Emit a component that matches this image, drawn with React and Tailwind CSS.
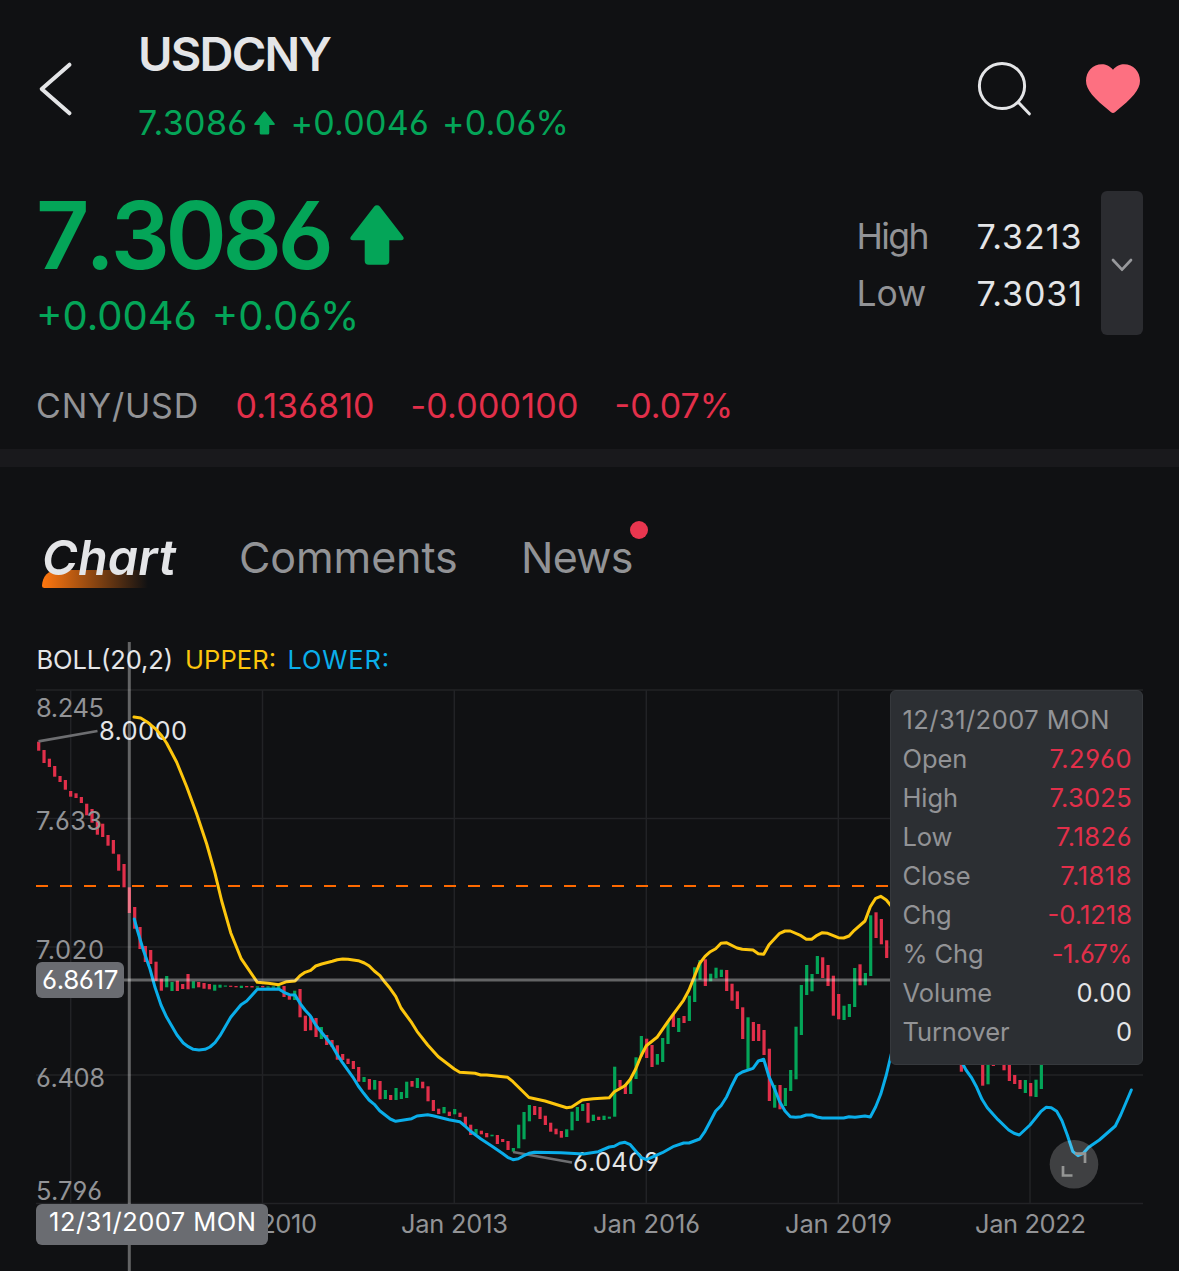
import React from "react";

// [slot, high, low, rising]
const CANDLES = [
  [0, 741.7, 750.7, 0], [1, 750, 763, 0], [2, 758.7, 767, 0], [3, 766, 776.7, 0], [4, 776, 782, 0],
  [5, 780, 789.7, 0], [6, 791, 796.7, 0], [7, 793.3, 798, 0], [8, 797, 803, 0], [9, 803.7, 815.3, 0],
  [10, 809, 822.7, 0], [11, 821.7, 834.7, 0], [12, 823.7, 837, 0], [13, 835, 845.7, 0], [14, 840, 853.7, 0],
  [15, 854.3, 870.7, 0], [16, 864, 887.3, 0], [17, 887.3, 913, 0], [18, 907, 928.7, 0], [19, 927, 949, 0],
  [20, 946, 962, 0], [21, 950, 964, 0], [22, 961.7, 981, 0], [23, 978.7, 990.7, 0], [24, 976, 987.3, 1],
  [25, 982, 991, 1], [26, 980.7, 991, 0], [27, 984, 989, 0], [28, 974, 989.3, 0], [29, 981.3, 988.3, 1],
  [30, 982, 987.3, 0], [31, 983, 988.7, 0], [32, 984, 989.3, 0], [33, 984.7, 990.7, 1], [34, 984.7, 987.7, 1],
  [35, 985.5, 986.7, 1], [36, 985.7, 986.9, 0], [37, 986, 987.3, 0], [38, 985.7, 988, 1], [39, 986, 987.3, 0],
  [40, 986, 987.5, 0], [41, 986.3, 987.7, 1], [42, 986, 987.3, 0], [43, 986.3, 987.7, 1], [44, 986.3, 987.7, 1],
  [45, 985.7, 988, 1], [46, 986, 997, 0], [47, 996, 999.7, 0], [48, 990.7, 1000, 1], [49, 989, 1017.3, 0],
  [50, 1015.7, 1031, 0], [51, 1016, 1030.3, 0], [52, 1018, 1037, 0], [53, 1027, 1039, 1], [54, 1035, 1045, 0],
  [55, 1040, 1047, 0], [56, 1045.3, 1059.7, 0], [57, 1054, 1060, 0], [58, 1058.7, 1064, 0], [59, 1061, 1069, 0],
  [60, 1067, 1081.7, 0], [61, 1077, 1082, 1], [62, 1079, 1089.7, 0], [63, 1080, 1089.7, 1], [64, 1081, 1099.3, 0],
  [65, 1090, 1099, 1], [66, 1095, 1100, 0], [67, 1088, 1100, 1], [68, 1092, 1099, 1], [69, 1081.7, 1098, 1],
  [70, 1081, 1086.7, 0], [71, 1078, 1088, 1], [72, 1081.7, 1088.3, 0], [73, 1086.3, 1101.3, 0], [74, 1100, 1111, 0],
  [75, 1108.7, 1114, 0], [76, 1107, 1113.3, 1], [77, 1111.7, 1116, 0], [78, 1109, 1114.3, 1], [79, 1112.7, 1117, 0],
  [80, 1116.7, 1126, 0], [81, 1124.7, 1135, 0], [82, 1129, 1134.3, 1], [83, 1130.7, 1134.3, 0], [84, 1133, 1137.3, 0],
  [85, 1134.7, 1136.3, 1], [86, 1135, 1144, 0], [87, 1139, 1142, 0], [88, 1141, 1150, 0], [89, 1148, 1151.7, 1],
  [90, 1124.7, 1148.3, 1], [91, 1112, 1139.3, 1], [92, 1105, 1121.3, 1], [93, 1106, 1115, 0], [94, 1107, 1119, 0],
  [95, 1115.7, 1125, 0], [96, 1122.7, 1131.7, 0], [97, 1128.7, 1134.3, 0], [98, 1131, 1137.7, 0], [99, 1129.3, 1137, 1],
  [100, 1111.7, 1130.3, 1], [101, 1107, 1121, 1], [102, 1104, 1111, 1], [103, 1103, 1122.7, 0], [104, 1114.7, 1121, 1],
  [105, 1116.7, 1120, 0], [106, 1115.7, 1120, 1], [107, 1116.7, 1118.7, 1], [108, 1066.7, 1116.7, 1], [109, 1080, 1087.3, 0],
  [110, 1084, 1094, 0], [111, 1078.7, 1094, 1], [112, 1057.3, 1079, 1], [113, 1036, 1056.7, 1], [114, 1038.7, 1058, 0],
  [115, 1045, 1067, 0], [116, 1054, 1064.7, 1], [117, 1038, 1062, 1], [118, 1021.3, 1044, 1], [119, 1014.3, 1027, 0],
  [120, 1018, 1032, 1], [121, 1016, 1023, 0], [122, 995.7, 1021, 1], [123, 967.3, 1002, 1], [124, 960, 979.7, 1],
  [125, 959.3, 986, 0], [126, 973.7, 981.3, 1], [127, 967.7, 978.3, 1], [128, 969.7, 977, 1], [129, 970, 991, 0],
  [130, 983.7, 1000.7, 0], [131, 991.3, 1009, 0], [132, 1007.3, 1039, 0], [133, 1017.3, 1069.3, 1], [134, 1022, 1041, 0],
  [135, 1024, 1041, 0], [136, 1030, 1055, 0], [137, 1048.7, 1101, 0], [138, 1085, 1107.7, 1], [139, 1085, 1109.3, 0],
  [140, 1088, 1106, 1], [141, 1070, 1091, 1], [142, 1026.7, 1079.3, 1], [143, 985, 1035, 1], [144, 965, 995, 1],
  [145, 974, 991.3, 1], [146, 956, 974, 1], [147, 957.3, 978, 0], [148, 965, 986, 0], [149, 975.7, 1015.7, 0],
  [150, 994, 1019.3, 0], [151, 1005.7, 1020, 1], [152, 1004, 1017, 1], [153, 968, 1007, 1], [154, 964.3, 985.3, 0],
  [155, 973, 985.3, 1], [156, 915.3, 976, 1], [157, 912.3, 938, 0], [158, 919, 944.3, 0], [159, 940.3, 958, 0],
  [173, 1050, 1071.7, 0], [177, 1050, 1085.7, 0], [178, 1050, 1084.3, 1], [179, 1050, 1066, 0], [181, 1050, 1070.3, 0],
  [182, 1050, 1081, 0], [183, 1075, 1084, 0], [184, 1080, 1089, 0], [185, 1080, 1093, 1], [186, 1083, 1096.3, 0],
  [187, 1079.7, 1097, 1], [188, 1050, 1089, 1],
];

const UPPER =
  "134,717 140.7,718 146.7,721.7 155,728.3 161.7,735.7 166.7,743.3 176.7,762.3 186.7,786.7 196.7,814 206.7,844 215,873.3 221.7,901 230.7,932.7 241,958.3 257.3,982.3 268.3,983.3 278.7,984.7 286.7,981.7 295,981 300,975.7 305,972.3 310.7,970.3 315.7,966 321.7,964 332.3,961.3 337.3,959.7 342.7,959 348,959.3 358.3,960.7 364.3,963 369,965.7 374.3,971 380,975.7 385,982.3 390,988.3 395.7,996.3 401,1008 411.7,1022.7 417,1031.3 427.7,1045 438.3,1056.7 454.3,1069 459.7,1072.3 475,1073.3 480.7,1075 486.7,1075 507.7,1077.3 513,1081.7 529,1097.5 545,1101 566.7,1107.7 571.7,1107 582.3,1100 593.3,1098.7 609.3,1097.7 614.3,1091.7 625,1085.7 630.3,1079.3 635.7,1069 641,1056 646.3,1045.7 657,1037.3 667.7,1021.8 683.5,1000.3 689,990 694.3,976.7 699.7,963.3 705,956.3 710.3,951.7 715.7,948.7 721,943.3 726.3,942.7 737,948 742.3,949.3 753,950 758.3,953.7 763.7,954.3 769,944.7 774.3,939 779.7,933.3 785,931 790.3,931 801,935.7 806.3,939.3 811.7,939.3 817,935.3 822.3,932.7 827.7,933.3 838.3,937.7 843.7,938 849,936 854.3,930.3 865,921 870.3,906.7 875.7,898.3 880.7,896.3 886.3,900 892,907";

const LOWER_LEFT =
  "134.3,919 137.3,930 143.3,950 150,969 155,987.3 161,1005 166.7,1017.3 177,1035 183.3,1043 188.3,1046.7 193.3,1049.3 199,1050 205,1049.3 210,1047 215,1042.7 220,1035.7 230.7,1017.3 241,1004.7 246.7,1001 257.3,989.3 278.7,989 284,992.3 289.3,994.7 295,995 300,1003.3 305,1010 310.3,1015.7 315.7,1025 326.3,1038.3 331.7,1045 337,1054.3 342.3,1062.3 353,1077.3 358.3,1086 363.7,1093.3 369,1100 374.3,1104.3 379.7,1110.7 390.3,1119 395.7,1121.3 411.7,1118.7 417,1116 427.7,1114.7 433,1115.7 449,1119.7 459.7,1121.7 465,1126 470.3,1131 481,1139 491.7,1146 502.3,1153.3 507.7,1157.3 513,1159.7 518.3,1158.7 523.7,1155.7 529,1153.3 534.3,1152.3 561,1152.7 583.3,1154 598.3,1151.7 609.3,1147 614.3,1146.3 619.7,1143.3 625,1142.3 630.3,1144.7 641,1157.3 646.3,1159.7 651.7,1157.3 662.3,1152.7 673,1146.7 683.7,1143 689,1143 699.7,1139 705,1131.3 710.3,1121.3 715.7,1111 721,1105.7 726.7,1096.7 731.7,1085.7 737,1075.3 742.3,1072 753,1068.3 758.3,1061 763.7,1059.3 769,1076.7 774.3,1088.3 779.7,1101.7 785,1111 790.3,1116.7 795.7,1117.3 801,1116.7 806.3,1115 811.7,1115 817,1117 822.3,1118 843.7,1118 849,1116.7 855,1117.3 865,1116 870.3,1117 875.7,1106.7 880.7,1094.3 886.3,1075 892,1051";

const LOWER_RIGHT =
  "960,1060 963.3,1065 966,1070 971.3,1077.3 976.7,1087.3 982,1099.3 987.3,1107.7 998,1119.7 1008.7,1130 1014,1133.3 1019.3,1135 1030,1125 1040.7,1111.7 1046,1107.3 1051.3,1107.7 1056.7,1111.3 1062,1120.7 1067.3,1135 1072.7,1151.3 1078,1155.7 1083.3,1153.3 1088.7,1147.3 1099.3,1140 1115.3,1126 1120.7,1115 1131.3,1090";

const V_GRID = [70.7, 262.5, 454.3, 646.3, 838.3, 1030];
const H_GRID = [690, 818.5, 947, 1075, 1203.5];

// [text, x, baseline, width]
const PRICE_LABELS = [
  ["8.245", 36, 716.5, 68],
  ["7.633", 36, 830.3, 66],
  ["7.020", 36, 958.6, 68],
  ["6.408", 36, 1087, 69],
  ["5.796", 36, 1200.3, 66],
];
const DATE_LABELS = [
  ["Jan 2010", 211, 1233, 106],
  ["Jan 2013", 401, 1233, 107],
  ["Jan 2016", 593, 1233, 107],
  ["Jan 2019", 785, 1233, 107],
  ["Jan 2022", 975, 1233, 111],
];

const TOOLTIP = [
  ["Open", "7.2960", "tracking-[0.5px] text-[#e22f4a]"],
  ["High", "7.3025", "tracking-[0.3px] text-[#e22f4a]"],
  ["Low", "7.1826", "tracking-[0.5px] text-[#e22f4a]"],
  ["Close", "7.1818", "tracking-[0.5px] text-[#e22f4a]"],
  ["Chg", "-0.1218", "text-[#e22f4a]"],
  ["% Chg", "-1.67%", "tracking-[-0.4px] text-[#e22f4a]"],
  ["Volume", "0.00", "tracking-[0.3px] text-[#e4e5e7]"],
  ["Turnover", "0", "text-[#e4e5e7]"],
];

function UpArrow({ className }) {
  return (
    <svg viewBox="0 0 54 60" className={className} fill="currentColor">
      <path d="M24.2 1.6a3.6 3.6 0 0 1 5.6 0L53 31.4c1.4 1.9.6 3.8-1.8 3.8H39.3v20.6a4 4 0 0 1-4 4H18.7a4 4 0 0 1-4-4V35.2H2.8C.4 35.2-.4 33.3 1 31.4Z" />
    </svg>
  );
}

function Label({ item, fill }) {
  return (
    <text x={item[1]} y={item[2]} textLength={item[3]} lengthAdjust="spacing" fill={fill}>
      {item[0]}
    </text>
  );
}

function Header() {
  return (
    <header className="flex h-[172px] items-start pl-[38px] pr-[39px]">
      <svg viewBox="0 0 36 56" className="mt-[61px] h-14 w-9" fill="none" stroke="#e4e5e7" strokeWidth="4" strokeLinecap="round" strokeLinejoin="round">
        <path d="M31.5 3.7 3.7 28l27.8 24.3" />
      </svg>
      <div className="ml-[63px] pt-6">
        <h1 className="h-[60px] pl-px text-[47px] font-semibold leading-[60px] tracking-[-1.8px] text-[#e4e5e7]">USDCNY</h1>
        <div className="mt-[19px] flex h-10 items-center whitespace-nowrap text-[34px] leading-10 text-[#04a558]">
          <span className="ml-px tracking-[0.4px]">7.3086</span>
          <UpArrow className="ml-1.5 h-6 w-[21px]" />
          <span className="ml-4 tracking-[0.25px]">+0.0046</span>
          <span className="ml-[13px] tracking-[0.3px]">+0.06%</span>
        </div>
      </div>
      <svg viewBox="0 0 56 56" className="ml-auto mt-[60px] size-14" fill="none" stroke="#e4e5e7" strokeWidth="3" strokeLinecap="round">
        <circle cx="27" cy="26" r="22.6" />
        <path d="M43.3 42.3 54.3 53.8" />
      </svg>
      <svg viewBox="0 0 54 50" className="ml-[55px] mt-16 h-[50px] w-[54px]" fill="#fd7081">
        <path d="M27 5.8C30.5 1.5 34.2.2 38 .2 47.3.2 54 7.3 54 16.8 54 26 46 34.5 29.2 48a3.5 3.5 0 0 1-4.4 0C8 34.5 0 26 0 16.8 0 7.3 6.7.2 16 .2 19.8.2 23.5 1.5 27 5.8Z" />
      </svg>
    </header>
  );
}

function Quote() {
  return (
    <section className="h-[277px] pl-9 pr-9 pt-[19px]">
      <div className="flex h-[144px] items-start justify-between">
        <div className="text-[#04a558]">
          <div className="flex h-[88px] items-center">
            <span className="w-[298px] text-[93px] font-semibold leading-[88px] tracking-[-4.3px] [font-kerning:none]">7.3086</span>
            <UpArrow className="ml-4 h-[60px] w-[54px]" />
          </div>
          <div className="mt-2.5 flex h-[52px] gap-[15px] pt-px text-[40px] leading-[52px]">
            <span>+0.0046</span>
            <span>+0.06%</span>
          </div>
        </div>
        <div className="flex items-center">
          <div className="grid grid-cols-[120px_auto] pt-[3px] text-[34px] leading-[57px] text-[#e4e5e7]">
            <span className="text-[35.5px] tracking-[-1.6px] text-[#929396]">High</span>
            <span className="tracking-[0.9px]">7.3213</span>
            <span className="text-[35.5px] tracking-[0.1px] text-[#929396]">Low</span>
            <span className="tracking-[0.9px]">7.3031</span>
          </div>
          <button className="ml-[18px] flex h-[144px] w-[42px] items-center justify-center rounded-md bg-[#2b2c30]" aria-label="More">
            <svg viewBox="0 0 22 14" className="mt-1 h-3.5 w-[22px]" fill="none" stroke="#98999c" strokeWidth="2.7" strokeLinecap="round" strokeLinejoin="round">
              <path d="M2 2 11 11.7 20 2" />
            </svg>
          </button>
        </div>
      </div>
      <div className="mt-[46px] flex h-[50px] text-[34px] leading-[50px] text-[#e22f4a]">
        <span className="w-[199.5px] tracking-[0.8px] text-[#929396]">CNY/USD</span>
        <span className="w-[175px] tracking-[0.1px]">0.136810</span>
        <span className="w-[204px] tracking-[0.2px]">-0.000100</span>
        <span>-0.07%</span>
      </div>
    </section>
  );
}

function Tabs() {
  return (
    <nav className="flex h-[163px] items-start pl-[42px] pt-[63px] text-[43px] leading-[54px] text-[#929396]">
      <div className="relative w-[197px]">
        <svg viewBox="0 0 106 18" className="absolute left-0 top-10 h-[18px] w-[106px]">
          <defs>
            <linearGradient id="tab">
              <stop offset="0" stopColor="#ff770f" />
              <stop offset="1" stopColor="#ff770f" stopOpacity="0" />
            </linearGradient>
          </defs>
          <path d="M15 0H106V18H2.5Q0 18 0 15.5C.3 7 6 0 15 0Z" fill="url(#tab)" />
        </svg>
        <span className="relative top-px text-[48.5px] font-semibold italic tracking-[0.2px] text-[#e4e5e7] [font-feature-settings:'cv11']">Chart</span>
      </div>
      <span className="w-[282px] tracking-[-0.1px]">Comments</span>
      <div className="relative">
        <span className="tracking-[-0.7px]">News</span>
        <i className="absolute -right-[15.5px] -top-[9px] size-[18px] rounded-full bg-[#e9364f]" />
      </div>
    </nav>
  );
}

function Chart() {
  return (
    <section className="relative h-[641px] overflow-hidden">
      <svg viewBox="0 630 1179 641" className="block h-[641px] w-full font-[Inter,sans-serif] text-[25.5px]" fill="none">
        <g stroke="#222326" strokeWidth="1.5">
          {V_GRID.map((x) => <path key={x} d={`M${x} 690V1203.5`} />)}
          {H_GRID.map((y) => <path key={y} d={`M36 ${y}H1143`} />)}
        </g>
        <Label item={["BOLL(20,2)", 36.5, 669, 136.5]} fill="#e4e5e7" />
        <Label item={["UPPER:", 185, 669, 91]} fill="#fdc60d" />
        <Label item={["LOWER:", 287.5, 669, 101.5]} fill="#0aaeea" />
        {CANDLES.map(([k, hi, lo, up]) => (
          <rect key={k} x={37.1 + k * 5.3333} y={hi} width="3.2" height={lo - hi} fill={up ? "#04a558" : "#e22f4a"} />
        ))}
        <path d="M36 886H891" stroke="#ff6a00" strokeWidth="2" strokeDasharray="12 12" />
        <g stroke="#6d6e71" strokeWidth="2.7">
          <path d="M38.5 741.3 97.5 731" />
          <path d="M513 1152 572 1162.5" />
        </g>
        {PRICE_LABELS.map((l) => <Label key={l[0]} item={l} fill="#929396" />)}
        {DATE_LABELS.map((l) => <Label key={l[0]} item={l} fill="#929396" />)}
        <Label item={["8.0000", 99, 739.5, 88]} fill="#e4e5e7" />
        <Label item={["6.0409", 573, 1171.3, 86]} fill="#e4e5e7" />
        <g strokeWidth="3" strokeLinejoin="round" strokeLinecap="round">
          <polyline points={UPPER} stroke="#fdc60d" />
          <polyline points={LOWER_LEFT} stroke="#0aaeea" />
          <polyline points={LOWER_RIGHT} stroke="#0aaeea" />
        </g>
        <g stroke="#fff" strokeOpacity=".35" strokeWidth="3">
          <path d="M129.3 642V1271" />
          <path d="M124 980H891" />
        </g>
        <circle cx="1074" cy="1164.3" r="24.3" fill="#fff" fillOpacity=".2" />
        <path d="M1075 1153.7H1085V1163M1063 1166V1175.5H1072.5" stroke="#949594" strokeWidth="2.7" />
      </svg>

      <div className="absolute left-9 top-[332px] flex h-9 w-[88px] items-center justify-center rounded-md bg-[#6a6c71] pb-px text-[26px] tracking-[-0.4px] text-white">
        6.8617
      </div>
      <div className="absolute left-9 top-[573.5px] flex h-[41.5px] w-[231.5px] items-center justify-center rounded-md bg-[#6a6c71] pb-[5px] pl-0.5 text-[25.5px] tracking-[0.45px] text-white">
        12/31/2007 MON
      </div>

      <div className="absolute left-[890px] top-[60px] h-[375px] w-[253px] rounded-md border border-[#36393d] bg-[#2c2f33] pl-[11.5px] pr-2.5 pt-[8.5px] text-[25.5px] leading-[39px] text-[#929396]">
        <div className="whitespace-nowrap tracking-[0.45px]">12/31/2007 MON</div>
        {TOOLTIP.map(([name, value, tone]) => (
          <div key={name} className="flex justify-between">
            <span className="tracking-[-0.1px]">{name}</span>
            <span className={tone}>{value}</span>
          </div>
        ))}
      </div>
    </section>
  );
}

export default function App() {
  return (
    <main className="h-[1271px] w-[1179px] overflow-hidden bg-[#101113] font-[Inter,sans-serif] [font-feature-settings:'cv03','cv04']">
      <Header />
      <Quote />
      <div className="h-[18px] bg-[#19191c]" />
      <Tabs />
      <Chart />
    </main>
  );
}
